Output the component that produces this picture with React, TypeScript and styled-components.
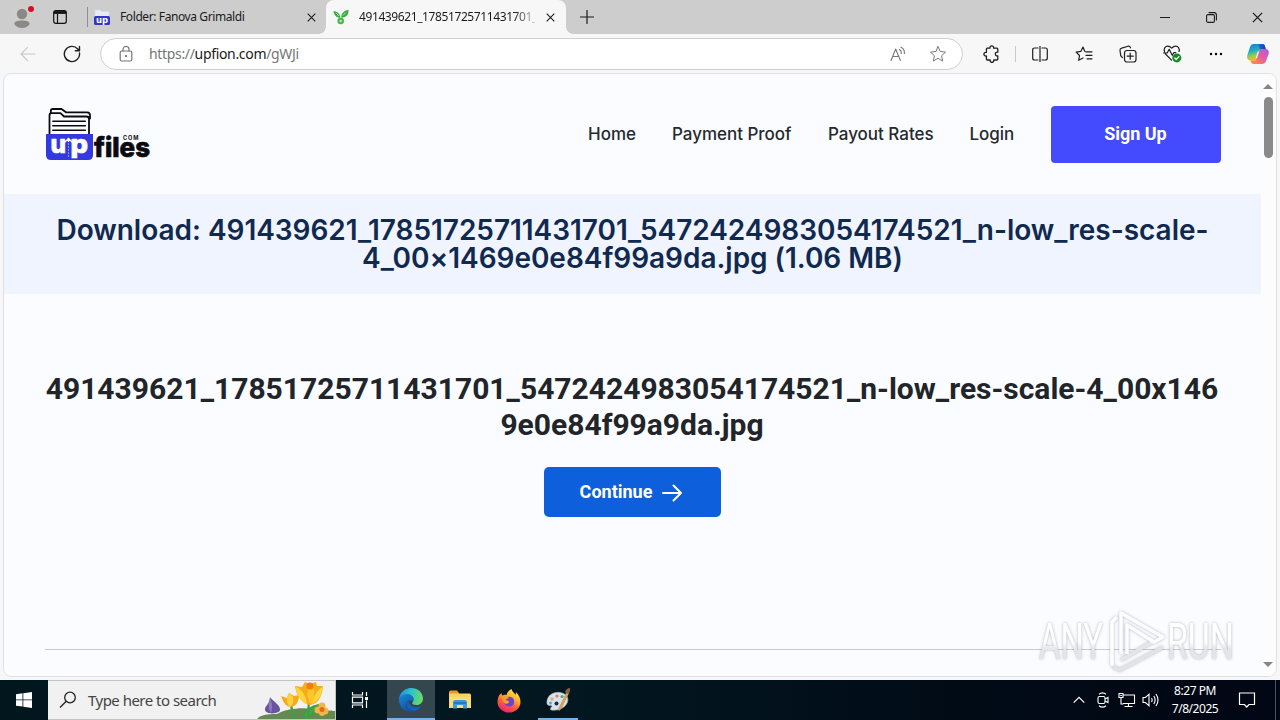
import React from "react";
import styled, { createGlobalStyle, css } from "styled-components";

const ui = `"Noto Sans", "Open Sans", sans-serif`;

const GlobalStyle = createGlobalStyle`
  *, *::before, *::after { box-sizing: border-box; }
  body { margin: 0; overflow: hidden; background: #f7f7f7; font-family: ${ui}; }
  button { font: inherit; border: 0; padding: 0; background: none; color: inherit; }
  h1, h2, p { margin: 0; }
  svg { display: block; flex: none; }
`;

const Desktop = styled.div`
  position: relative;
  width: 1280px;
  height: 720px;
  display: flex;
  flex-direction: column;
  overflow: hidden;
  background: #f7f7f7;
`;

/* ---------- browser chrome ---------- */

const TabStrip = styled.div`
  height: 34px;
  flex: none;
  display: flex;
  background: #cdcdcd;
  color: #1b1b1b;
`;

const Cell = styled.button<{ $w: number }>`
  width: ${(p) => p.$w}px;
  flex: none;
  height: 100%;
  display: flex;
  align-items: center;
  justify-content: center;
`;

const StripDivider = styled.div`
  width: 1px;
  height: 20px;
  margin: 7px 6px 0 11px;
  background: #8f8f8f;
`;

const Tab = styled.div<{ $active?: boolean }>`
  position: relative;
  display: flex;
  align-items: center;
  height: 34px;
  flex: none;
  width: ${(p) => (p.$active ? 240 : 232)}px;
  padding-left: ${(p) => (p.$active ? 7 : 0)}px;
  padding-right: ${(p) => (p.$active ? 1 : 0)}px;
  ${(p) =>
    p.$active &&
    css`
      background: #f7f7f7;
      border-radius: 8px 8px 0 0;
      &::before,
      &::after {
        content: "";
        position: absolute;
        bottom: 0;
        width: 7px;
        height: 7px;
      }
      &::before {
        left: -7px;
        background: radial-gradient(circle at 0 0, transparent 6.5px, #f7f7f7 7px);
      }
      &::after {
        right: -7px;
        background: radial-gradient(circle at 100% 0, transparent 6.5px, #f7f7f7 7px);
      }
    `}
`;

const TabTitle = styled.span<{ $fade?: boolean; $spacing: number }>`
  flex: 1;
  margin-left: 10px;
  overflow: hidden;
  white-space: nowrap;
  font-size: 12px;
  line-height: 18px;
  letter-spacing: ${(p) => p.$spacing}px;
  ${(p) =>
    p.$fade &&
    css`
      mask-image: linear-gradient(90deg, #000 155px, transparent 181px);
    `}
`;

const Spacer = styled.div`
  flex: 1;
`;

const Toolbar = styled.div`
  height: 39px;
  flex: none;
  display: flex;
  align-items: center;
  padding: 0 2px 0 6px;
  background: #f7f7f7;
  color: #1f1f1f;
`;

const AddressBar = styled.div`
  width: 863px;
  height: 32px;
  margin: 1px 7px 0 6px;
  padding: 0 4px 0 5px;
  display: flex;
  align-items: center;
  border: 1px solid #cfcfcf;
  border-radius: 16px;
  background: #fff;
  color: #767676;
`;

const Url = styled.span`
  margin-left: 3px;
  font-size: 14px;
  line-height: 20px;
  letter-spacing: -0.33px;
  b {
    font-weight: 400;
    color: #1a1a1a;
  }
`;

const ToolDivider = styled.div`
  width: 1px;
  height: 16px;
  margin: 0 2px 0 1px;
  background: #c9c9c9;
`;

/* ---------- web page ---------- */

const Frame = styled.div`
  height: 604px;
  flex: none;
  margin: 0 3px 0 3px;
  display: flex;
  overflow: hidden;
  border: 1px solid #e1e1e3;
  border-radius: 8px;
  background: #fafcff;
`;

const Page = styled.main`
  width: 1257px;
  flex: none;
  height: 100%;
`;

const SiteHeader = styled.header`
  height: 120px;
  padding: 0 40px 0 41px;
  display: flex;
  align-items: center;
  justify-content: space-between;
`;

const Nav = styled.nav`
  display: flex;
  align-items: center;
  color: #25292e;
  font: 500 17px/24px Inter, sans-serif;
`;

const NavLink = styled.a<{ $w: number }>`
  width: ${(p) => p.$w}px;
  margin-right: 36px;
  white-space: nowrap;
  letter-spacing: -0.02px;
`;

const SignUp = styled.button`
  width: 170px;
  height: 57px;
  padding-right: 1px;
  border-radius: 4px;
  background: #444bff;
  color: #fff;
  font: 700 18px/24px Roboto, sans-serif;
  letter-spacing: -0.05px;
`;

const Banner = styled.section`
  height: 100px;
  padding-top: 22px;
  background: #f0f4ff;
  color: #10294f;
  text-align: center;
`;

const BannerTitle = styled.h1`
  font: 600 28px/28px Inter, sans-serif;
  letter-spacing: -0.03px;
  white-space: nowrap;
`;

const Body = styled.section`
  padding: 77px 40px 0 41px;
  display: flex;
  flex-direction: column;
  align-items: center;
`;

const FileName = styled.h2`
  margin-right: 2px;
  color: #212529;
  text-align: center;
  white-space: nowrap;
  font: 700 30px/36px Roboto, sans-serif;
`;

const Continue = styled.button`
  width: 177px;
  height: 50px;
  margin: 24px 2px 0 0;
  padding-right: 1px;
  display: flex;
  align-items: center;
  justify-content: center;
  gap: 9px;
  border-radius: 5px;
  background: #0d5fdb;
  color: #fff;
  font: 700 18px/24px Roboto, sans-serif;
`;

const Rule = styled.hr`
  width: 100%;
  height: 1px;
  margin: 132px 0 0;
  border: 0;
  background: #c8cacd;
`;

const ScrollBar = styled.div`
  width: 15px;
  display: flex;
  flex-direction: column;
  align-items: center;
  padding: 10px 1px 9px 0;
  background: #fcfcfd;
`;

const Arrow = styled.div<{ $down?: boolean }>`
  border: 5px solid transparent;
  border-top: ${(p) => (p.$down ? "5px solid #858585" : "0")};
  border-bottom: ${(p) => (p.$down ? "0" : "5px solid #858585")};
`;

const Thumb = styled.div`
  width: 9px;
  height: 61px;
  margin: 8px 0 0 1px;
  border-radius: 5px;
  background: #8a8a8a;
`;

const Watermark = styled.div`
  position: absolute;
  left: 1030px;
  top: 600px;
`;

/* ---------- taskbar ---------- */

const Taskbar = styled.footer`
  height: 40px;
  flex: none;
  margin-top: 3px;
  display: flex;
  background: linear-gradient(90deg, #02161e, #021720 45%, #010b16 75%, #010714);
  color: #fff;
`;

const Search = styled.div`
  width: 288px;
  display: flex;
  align-items: center;
  padding-left: 10px;
  border: 1px solid #c4c4c4;
  border-width: 1px 1px 1px 0;
  background: #f1f1f1;
  color: #444;
  overflow: hidden;
`;

const SearchLabel = styled.span`
  flex: 1;
  margin-left: 10px;
  white-space: nowrap;
  font-size: 15px;
  letter-spacing: -0.52px;
`;

const TaskItem = styled.button<{ $active?: boolean; $bar?: number; $w?: number }>`
  position: relative;
  width: ${(p) => p.$w ?? 49}px;
  display: flex;
  align-items: center;
  justify-content: center;
  background: ${(p) => (p.$active ? "#34474f" : "transparent")};
  &::after {
    content: "";
    position: absolute;
    left: ${(p) => (p.$active ? 0 : 5)}px;
    bottom: 0;
    height: 2px;
    width: ${(p) => p.$bar ?? 0}px;
    background: #76b2e8;
  }
`;

const TaskGap = styled.div`
  width: 3px;
`;

const Clock = styled.div`
  width: 62px;
  margin-left: 1px;
  padding-top: 2px;
  text-align: center;
  font-size: 12px;
  line-height: 18px;
  letter-spacing: -0.45px;
`;

const Peek = styled.div`
  width: 5px;
  margin-left: 7px;
  border-left: 1px solid #4b525a;
`;

/* ---------- icons ---------- */

type IconProps = { size?: number; width?: number; children: React.ReactNode; box?: string };
const Line = ({ size = 20, width = 1.2, box = "0 0 20 20", children }: IconProps) => (
  <svg width={size} height={size} viewBox={box} fill="none" stroke="currentColor" strokeWidth={width} strokeLinecap="round" strokeLinejoin="round">
    {children}
  </svg>
);

const CloseX = ({ s = 10 }: { s?: number }) => (
  <svg width={s} height={s} viewBox="0 0 10 10" stroke="#1b1b1b" strokeWidth="1.2"><path d="M.8.8l8.4 8.4M9.2.8L.8 9.2" /></svg>
);

const Avatar = () => (
  <svg width="28" height="34" viewBox="0 0 28 34">
    <circle cx="14" cy="17" r="11" fill="#d0cecb" />
    <circle cx="14" cy="14" r="5.2" fill="#8b8885" />
    <path d="M6.3 24c0-2.5 3-3.6 7.700-3.600s7.700 1.100 7.700 3.600c-1.500 2.500-4.500 4-7.700 4s-6.200-1.500-7.700-4z" fill="#8b8885" />
    <circle cx="23" cy="9" r="4" fill="#d4d2cf" />
    <circle cx="23" cy="9" r="3" fill="#d9101f" />
  </svg>
);

const FolderFavicon = () => (
  <svg width="16" height="18" viewBox="0 0 16 18">
    <path d="M1 10V2h5l1.500 1.500H15V10" fill="#e8ebf5" stroke="#d9dce8" strokeWidth=".8" />
    <rect y="8" width="16" height="9" rx="1.500" fill="#3236c6" />
    <text x="8" y="15" textAnchor="middle" fontFamily="DejaVu Sans" fontWeight="700" fontSize="8.500" fill="#fff">up</text>
  </svg>
);

const SproutFavicon = () => (
  <svg width="16" height="16" viewBox="0 0 16 16">
    <path d="M7.300 9C3 8.600 1 6 .5 2c3.900.4 6.600 2.600 6.800 7z" fill="#35b13c" />
    <path d="M8.300 8.700C8 4.500 11 1.500 15.500 1c.2 4.700-2.500 7.500-7.200 7.700z" fill="#2fae37" />
    <path d="M3.300 4.200l2.500 2.700M12.800 3.500L10 6.500" stroke="#c6ecc6" strokeWidth=".9" />
    <circle cx="7.700" cy="12" r="2.300" fill="#b9e4b9" stroke="#45b84b" strokeWidth="2" />
  </svg>
);

const Copilot = () => (
  <svg width="24" height="24" viewBox="0 0 24 24">
    <defs>
      <linearGradient id="cp1" x1="0" y1="0" x2="0.300" y2="1"><stop stopColor="#1675d8" /><stop offset=".5" stopColor="#25b5bd" /><stop offset=".75" stopColor="#9fca50" /><stop offset="1" stopColor="#f6ba25" /></linearGradient>
      <linearGradient id="cp2" x1="1" y1="0" x2="0.200" y2="1"><stop stopColor="#a85bea" /><stop offset=".5" stopColor="#e25ba5" /><stop offset="1" stopColor="#ff8a43" /></linearGradient>
      <linearGradient id="cp3" x1="0" y1="0" x2="1" y2="0"><stop stopColor="#1a6fe0" /><stop offset="1" stopColor="#1b3ca8" /></linearGradient>
    </defs>
    <path d="M8 2h8.500c1.500 0 2 .8 2.400 2l.9 3h-3.300c-1.800 0-2.600.8-3.100 2.300l-2 6.200c-.7 2-1.700 3-3.700 3H4.500C1.800 18.500.5 16 1.400 13L4 5c.7-2 2-3 4-3z" fill="url(#cp1)" />
    <path d="M12 2h4.500c1.500 0 2 .8 2.400 2l.9 3h-3.300c-1.200 0-1.800.4-2.300 1z" fill="url(#cp3)" />
    <path d="M16 22H7.500c-1.500 0-2-.8-2.400-2l-.6-1.500h3.200c1.800 0 2.700-.8 3.200-2.300l2.200-6.600C13.700 7.700 14.700 7 16.500 7h3c2.700 0 4 2.300 3.100 5L20 19c-.7 2-2 3-4 3z" fill="url(#cp2)" />
    <path d="M13.200 9.500h-1.500l-2 6.500h1.300z" fill="#f4edf3" />
  </svg>
);

const Logo = () => (
  <svg width="106" height="56" viewBox="0 0 106 56">
    <g fill="none" stroke="#0b0b0f" strokeWidth="1.800" strokeLinejoin="round">
      <path d="M4.500 28V9.500q0-2.300 2-2.300h9l3.500 3.300h22.500q2.500 0 2.500 2.500V28" />
      <path d="M5.800 7V5q0-2 2-2h8.700l4.500 3.300H42q3 0 3 3v4" />
      <path d="M7.800 15.300h32.500M7.800 19.800h32.500M7.800 24.300h32.500" strokeWidth="1.500" strokeLinecap="round" />
    </g>
    <path d="M1 28h47v21q0 5-5 5H6q-5 0-5-5z" fill="#3438df" />
    <g fontFamily="Inter, sans-serif" fontWeight="800" strokeLinejoin="round" strokeWidth=".7">
      <text x="5.500" y="47" textLength="15.500" lengthAdjust="spacingAndGlyphs" fontSize="25" fill="#fff" stroke="#fff">u</text>
      <text x="25.500" y="47" textLength="17.500" lengthAdjust="spacingAndGlyphs" fontSize="25" fill="#fff" stroke="#fff">p</text>
      <text x="49" y="50.500" textLength="56" lengthAdjust="spacingAndGlyphs" fontSize="27.500" fill="#0b0b0f" stroke="#0b0b0f">files</text>
    </g>
    <path d="M19.500 36.500l4-4 4 4M23.500 33v3" fill="none" stroke="#fff" strokeWidth="1.300" />
    <path d="M23.500 51V37" fill="none" stroke="#8d90f2" strokeWidth="1" strokeDasharray="2 1" />
    <text x="78" y="34.300" textLength="15.500" lengthAdjust="spacing" fontFamily="Inter, sans-serif" fontWeight="700" fontSize="5.600" fill="#0b0b0f">COM</text>
  </svg>
);

const Flowers = () => (
  <svg width="78" height="38" viewBox="0 0 78 38">
    <path d="M0 38c3-4 10-5 20-5 8-5 24-7 36-5 8 2 15 1 22 2v8z" fill="#628b52" />
    <path d="M38 38c-3-9-5-12-4-18M52 38c-2-8 0-12 0-18M46 36c2-6 8-11 16-12-3 6-8 10-12 12z" stroke="#3f9f43" strokeWidth="2.200" fill="#46a64a" />
    <path d="M13 16c1 3 11 8 10 13-.6 4-14 5-15 0-.6-4 5-6 5-13z" fill="#6654a0" />
    <path d="M13 17c2 5 3 9 1 15-3-4-3-9-1-15z" fill="#8d78bc" />
    <path d="M24 15l6 2 2-5 5 3 5-1c0 8-4 12-9 12-5-1-7-6-9-11z" fill="#f7a91d" />
    <path d="M32 12l4 4c1 4 0 8-3 10-4-4-4-9-1-14z" fill="#ffd13b" />
    <path d="M38 5l7 1 3-5 5 2 6-2 1 4 6 0c-1 11-5 18-13 19-8-1-14-10-15-19z" fill="#f6ad19" />
    <path d="M39 6c6 2 10 9 11 17-6-3-11-9-11-17zM66 6c-6 2-9 9-11 17 5-2 10-8 11-17z" fill="#ffd640" />
    <path d="M53 3l4 5c1 6 0 11-3 15-4-5-5-12-1-20z" fill="#ffc529" />
    <circle cx="53" cy="5" r="3.500" fill="#ed7d17" />
    <g fill="#f4b448"><circle cx="65" cy="25" r="3.500" /><circle cx="68" cy="30" r="3.500" /><circle cx="61" cy="29" r="3.500" /><circle cx="65" cy="32" r="3" /></g>
    <circle cx="65" cy="28.500" r="2.500" fill="#dd6d1b" />
  </svg>
);

const Edge = () => (
  <svg width="26" height="26" viewBox="0 0 26 26">
    <defs>
      <linearGradient id="e1" x1="0" y1=".3" x2="1" y2=".5"><stop stopColor="#1e8fd8" /><stop offset=".45" stopColor="#2bc0cf" /><stop offset="1" stopColor="#6bdc61" /></linearGradient>
      <linearGradient id="e2" x1="0" y1="0" x2=".5" y2="1"><stop stopColor="#1b86d6" /><stop offset="1" stopColor="#0d57a8" /></linearGradient>
    </defs>
    <path d="M1 13C1 6 6.500 1 13 1c7 0 12 4.800 12 10.500 0 4-3 6.500-6.500 6.500-3 0-4.300-1-4.300-2 0-.7 1.300-1 1.300-3.300 0-2.600-2.500-4.700-6-4.700C5 8 2 10 1 13z" fill="url(#e1)" />
    <path d="M1 13c.6-3.400 4-6 8.500-6 3.500 0 6 2.400 6 5 0 1-.4 1.800-1 2.500C12 12 8 13.500 8 17.500c0 4 3 7 7 7.300C7.500 26 1 20.500 1 13z" fill="url(#e2)" />
    <path d="M10.700 12.500C9 14 8.200 16 8.600 18c.7 4 4.500 6.500 8 6.200 2.700-.7 5-2.700 6.500-5-6 2.700-12.600.5-12.400-6.700z" fill="#1660b8" />
  </svg>
);

const Explorer = () => (
  <svg width="24" height="22" viewBox="0 0 24 22">
    <path d="M1 3q0-1.500 1.500-1.500H9L11 4v3H1z" fill="#e59b26" />
    <path d="M1 4.500h20.500Q23 4.500 23 6v13H1z" fill="#fbd35f" />
    <path d="M1 8h22v11H1z" fill="#f9da7d" />
    <path d="M5 19.500v-6Q5 11 7.500 11h9q2.500 0 2.500 2.500v6h-4V16H9v3.500z" fill="#3c9bdb" />
    <path d="M6 13h12v2H6z" fill="#2379bd" />
  </svg>
);

const Firefox = () => (
  <svg width="24" height="25" viewBox="0 0 24 25">
    <defs>
      <linearGradient id="f1" x1=".8" y1="0" x2=".3" y2="1"><stop stopColor="#fff04a" /><stop offset=".35" stopColor="#ffb52f" /><stop offset=".65" stopColor="#ff5d38" /><stop offset="1" stopColor="#ed1e78" /></linearGradient>
    </defs>
    <path d="M14.500 1c.5 3 3 3.500 4 6 .5-1 .4-2 .2-3 3 2.500 4.800 6 4.800 10A11.500 10.500 0 0 1 .5 14C.5 9.500 2 7 4.500 5c0 1.200.3 2 1 2.500C7 6.500 8 6.500 9.500 7 10.500 4 12 2 14.500 1z" fill="url(#f1)" />
    <path d="M7 10c2.500-1 5.500-2.500 9 0 2.500 3.500 1 8.500-3.500 8.500S6 14.500 7 12z" fill="#6b43d4" />
    <path d="M5 8c2 0 5 0 7 2-2 .5-3 1-3.500 2.500C10.500 12 12 13 12 14.500c-2 2-4 1.500-5 0C5 12.500 4.500 10 5 8z" fill="#ff9a2e" />
  </svg>
);

const Paint = () => (
  <svg width="26" height="26" viewBox="0 0 26 26">
    <path d="M2 17C1 9 8 4.500 15 5.500c6 .8 9 5 7.500 9.500-2 6-10 9-16 8-2-.4-1-2 .5-3.500C8 18 4.500 20 2 17z" fill="#d8e4ea" stroke="#9fb4bf" strokeWidth=".6" />
    <circle cx="7" cy="12" r="1.700" fill="#e5a878" /><circle cx="12" cy="9" r="1.600" fill="#d87b70" /><circle cx="5.500" cy="16" r="1.500" fill="#5ca9cb" /><circle cx="17" cy="9.500" r="1.600" fill="#59a768" /><circle cx="11.500" cy="16.500" r="2" fill="#183039" />
    <path d="M22 4l2 2-7 15-3 3-1-2z" fill="#d3a063" />
    <path d="M20 5c1-3 3-4 5-4 .5 2 0 5-2.500 6z" fill="#8a6041" />
  </svg>
);

const WatermarkArt = () => (
  <svg width="216" height="76" viewBox="0 0 216 76" style={{ filter: "drop-shadow(0 0 1.5px rgba(70,70,80,.38))" }}>
    <defs>
      <linearGradient id="wm" x1="0" y1="0" x2="0" y2="1"><stop stopColor="#fff" /><stop offset=".5" stopColor="#fff" /><stop offset=".62" stopColor="#e6e6ea" /><stop offset="1" stopColor="#e2e3e7" /></linearGradient>
    </defs>
    <g fill="url(#wm)" fontFamily="Roboto" fontSize="50">
      <text x="9" y="59" textLength="64" lengthAdjust="spacingAndGlyphs">ANY</text>
      <text x="137" y="59" textLength="67" lengthAdjust="spacingAndGlyphs">RUN</text>
    </g>
    <g fill="none" strokeLinejoin="round" strokeWidth="3.500">
      <path d="M82 66V22l5-5" stroke="#fff" />
      <path d="M83 67l7 3 43-23" stroke="#e2e3e7" />
      <path d="M91 60l33-19" stroke="#e6e6ea" />
      <path d="M91 54V13l42 24-9 5-27-17v29" stroke="#fdfdff" />
    </g>
  </svg>
);

const navItems: [string, number][] = [
  ["Home", 48],
  ["Payment Proof", 120],
  ["Payout Rates", 105.5],
  ["Login", 45.5],
];

export default function App() {
  return (
    <Desktop>
      <GlobalStyle />
      <TabStrip>
        <Cell $w={44}><Avatar /></Cell>
        <Cell $w={32}>
          <svg width="14" height="14" viewBox="0 0 14 14" fill="none" stroke="#111" strokeWidth="1.200"><rect x=".7" y=".7" width="12.600" height="12.600" rx="2" /><path d="M1 2.500h12" strokeWidth="2.800" /><path d="M4.500 4v9" /></svg>
        </Cell>
        <StripDivider />
        <Tab>
          <FolderFavicon />
          <TabTitle $spacing={-0.4}>Folder: Fanova Grimaldi</TabTitle>
          <Cell $w={30}><CloseX s={9} /></Cell>
        </Tab>
        <Tab $active>
          <SproutFavicon />
          <TabTitle $fade $spacing={-0.4}>491439621_17851725711431701_5472424</TabTitle>
          <Cell $w={30}><CloseX s={9} /></Cell>
        </Tab>
        <Cell $w={42}><Line size={14} box="0 0 14 14"><path d="M7 .5v13M.5 7h13" /></Line></Cell>
        <Spacer />
        <Cell $w={46}><Line size={10} width={1} box="0 0 10 10"><path d="M0 5.500h10" /></Line></Cell>
        <Cell $w={46}><Line size={11} width={1.1} box="0 0 11 11"><rect x=".6" y="2.600" width="7.800" height="7.800" rx="1.500" /><path d="M3 .6h5q2.400 0 2.400 2.400v5" /></Line></Cell>
        <Cell $w={46}><CloseX s={11} /></Cell>
      </TabStrip>

      <Toolbar>
        <Cell $w={44}><Line size={16} width={1.1} box="0 0 16 16"><path d="M15 8H1M7.500 1.500L1 8l6.500 6.500" stroke="#c8c8c8" /></Line></Cell>
        <Cell $w={44}><Line size={18} width={1.4} box="0 0 18 18"><path d="M16.500 8A7.600 7.600 0 1 1 14.700 4l1.300 1.500M16.500 1.500v4.200h-4.200" /></Line></Cell>
        <AddressBar>
          <Cell $w={40}><Line size={16} width={1.2} box="0 0 16 16"><rect x="2.200" y="5" width="11.600" height="10" rx="1.500" /><path d="M5 5V3.500a3 3 0 0 1 6 0V5" /><circle cx="8" cy="10" r=".5" fill="currentColor" /></Line></Cell>
          <Url>https://<b>upfion.com</b>/gWJi</Url>
          <Spacer />
          <Cell $w={40}><Line size={16} width={1.1} box="0 0 16 16"><path d="M1 14.500L5.700 3l4.700 11.500M2.700 10.500h6M9.500 3.500q2 1.300 1.800 4M11 1.200q3.800 2 3.400 6.300" /></Line></Cell>
          <Cell $w={40}><Line size={18} width={1.1} box="0 0 20 20"><path d="M10 1.800l2.500 5.400 5.900.7-4.400 4 1.200 5.900-5.200-3-5.200 3L6 11.900l-4.400-4 5.900-.7z" /></Line></Cell>
        </AddressBar>
        <Cell $w={44}><Line size={18} width={1.300} box="0 0 18 18"><path d="M4 3.200h3c-.4-3.200 4-3.200 3.600 0h3.200q1 0 1 1v3c-3.300-.6-3.300 4.200 0 3.600v3.200q0 1-1 1h-3c.4 3.200-4 3.200-3.600 0H4.400q-1 0-1-1v-3c-3.300.6-3.300-4.200 0-3.600V4.200q0-1 .9-1z" /></Line></Cell>
        <ToolDivider />
        <Cell $w={44}><Line size={16} width={1.200} box="0 0 16 16"><path d="M6 2H2.500Q.7 2 .7 4v8q0 2 1.800 2H6M10 2h3.500q1.800 0 1.800 2v8q0 2-1.800 2H10M8 0v16" /></Line></Cell>
        <Cell $w={44}><Line size={18} width={1.200} box="0 0 18 18"><path d="M9.700 6.200L8 2 5.800 6.400l-4.700.7L4.500 10.500l-.8 4.800L8 13M10.700 6.800h6.300M11 10.300h6M12 13.800h5" /></Line></Cell>
        <Cell $w={44}><Line size={18} width={1.200} box="0 0 18 18"><rect x="5.500" y="5.500" width="11.500" height="11.500" rx="2.500" /><path d="M11.200 8.200v6M8.200 11.200h6M3.500 12.500C2.500 12 2 11.500 1.700 10.500L1 5.500q-.2-2 1.700-2.400L9 1.200q1.900-.3 2.600 1.700" /></Line></Cell>
        <Cell $w={44}>
          <Line size={20} width={1.200} box="0 0 20 20"><path d="M9.500 16.200L3.500 10M2.700 8C1 4.700 3.500 2.200 5.700 2.200c1.900 0 2.800.7 4 2 1.200-1.300 2.200-2 4-2 2.500 0 4.300 2.800 3.300 5.300M1.500 9h3.700l2-3.700 3 6 1.600-2.600h2" /><circle cx="14.800" cy="13.900" r="4.500" fill="#138a25" stroke="none" /><path d="M12.700 14l1.500 1.500 2.800-2.900" stroke="#fff" /></Line>
        </Cell>
        <Cell $w={44}><svg width="14" height="4"><circle cx="2" cy="2" r="1.200" /><circle cx="7" cy="2" r="1.200" /><circle cx="12" cy="2" r="1.200" /></svg></Cell>
        <Cell $w={40}><Copilot /></Cell>
      </Toolbar>

      <Frame>
        <Page>
          <SiteHeader>
            <Logo />
            <Nav>
              {navItems.map(([label, w]) => <NavLink key={label} $w={w}>{label}</NavLink>)}
              <SignUp>Sign Up</SignUp>
            </Nav>
          </SiteHeader>
          <Banner>
            <BannerTitle>
              Download: 491439621_17851725711431701_5472424983054174521_n-low_res-scale-<br />
              4_00×1469e0e84f99a9da.jpg (1.06 MB)
            </BannerTitle>
          </Banner>
          <Body>
            <FileName>
              491439621_17851725711431701_5472424983054174521_n-low_res-scale-4_00x146<br />
              9e0e84f99a9da.jpg
            </FileName>
            <Continue>
              Continue
              <Line size={22} width={2} box="0 0 22 22"><path d="M2 12h18M12.500 4.500L20 12l-7.500 7.500" /></Line>
            </Continue>
            <Rule />
          </Body>
        </Page>
        <ScrollBar>
          <Arrow />
          <Thumb />
          <Spacer />
          <Arrow $down />
        </ScrollBar>
      </Frame>

      <Watermark><WatermarkArt /></Watermark>

      <Taskbar>
        <Cell $w={48}>
          <svg width="16" height="16" viewBox="0 0 16 16" fill="#fff"><path d="M0 2.200l6.500-.9v6.200H0zM7.300 1.200L16 0v7.500H7.300zM0 8.300h6.500v6.300L0 13.700zM7.300 8.300H16V16l-8.700-1.200z" /></svg>
        </Cell>
        <Search>
          <svg width="20" height="20" viewBox="0 0 20 20" fill="none" stroke="#222" strokeWidth="1.300"><circle cx="12" cy="7.500" r="5.300" /><path d="M8.200 11.300L2 17.500" /></svg>
          <SearchLabel>Type here to search</SearchLabel>
          <Flowers />
        </Search>
        <TaskItem $w={48}>
          <svg width="18" height="18" viewBox="0 0 18 18" fill="none" stroke="#fff" strokeWidth="1.200"><path d="M1.500 1v3h10V1M1.500 17v-3h10v3M1.500 6.200h10v5.600h-10zM15.500 1v4M15.500 9.500V17" /><path d="M14 6h3v3h-3z" fill="#fff" stroke="none" /></svg>
        </TaskItem>
        <TaskGap />
        <TaskItem $active $bar={48} $w={48}><Edge /></TaskItem>
        <TaskItem><Explorer /></TaskItem>
        <TaskItem><Firefox /></TaskItem>
        <TaskItem $bar={40}><Paint /></TaskItem>
        <Spacer />
        <Cell $w={24}><svg width="12" height="8" viewBox="0 0 12 8" fill="none" stroke="#fff" strokeWidth="1.200"><path d="M.7 6.700L6 1.400l5.300 5.300" /></svg></Cell>
        <Cell $w={24}><svg width="12" height="16" viewBox="0 0 12 16" fill="none" stroke="#fff" strokeWidth="1.100"><rect x="1" y="4.500" width="7" height="7" rx="1.500" /><path d="M8 7l3-1.500v5L8 9M2 2.300Q5.500-.5 9 2.300M2 13.700q3.500 2.800 7 0" /></svg></Cell>
        <Cell $w={24}><svg width="18" height="16" viewBox="0 0 18 16" fill="none" stroke="#fff" strokeWidth="1.100"><path d="M5.500 3H16.500v8.500H5M10.500 11.500v3M6.500 14.500h8M1 1.500h4v4H1zM3 5.500v6.500h2.500M2.200 3.500h1.600" /></svg></Cell>
        <Cell $w={24}><svg width="18" height="16" viewBox="0 0 18 16" fill="none" stroke="#fff" strokeWidth="1.100"><path d="M1 5.500h2.500L7 2.200v11.600l-3.500-3.300H1zM9.500 6q1.300 2 0 4M11.800 4q2.600 4 0 8M14 2q4 6 0 12" /></svg></Cell>
        <Clock>8:27 PM<br />7/8/2025</Clock>
        <Cell $w={42}><svg width="18" height="18" viewBox="0 0 18 18" fill="none" stroke="#fff" strokeWidth="1.200"><path d="M1.500 2h15v11.500H11L8.700 16l-2.300-2.500H1.500z" /></svg></Cell>
        <Peek />
      </Taskbar>
    </Desktop>
  );
}
